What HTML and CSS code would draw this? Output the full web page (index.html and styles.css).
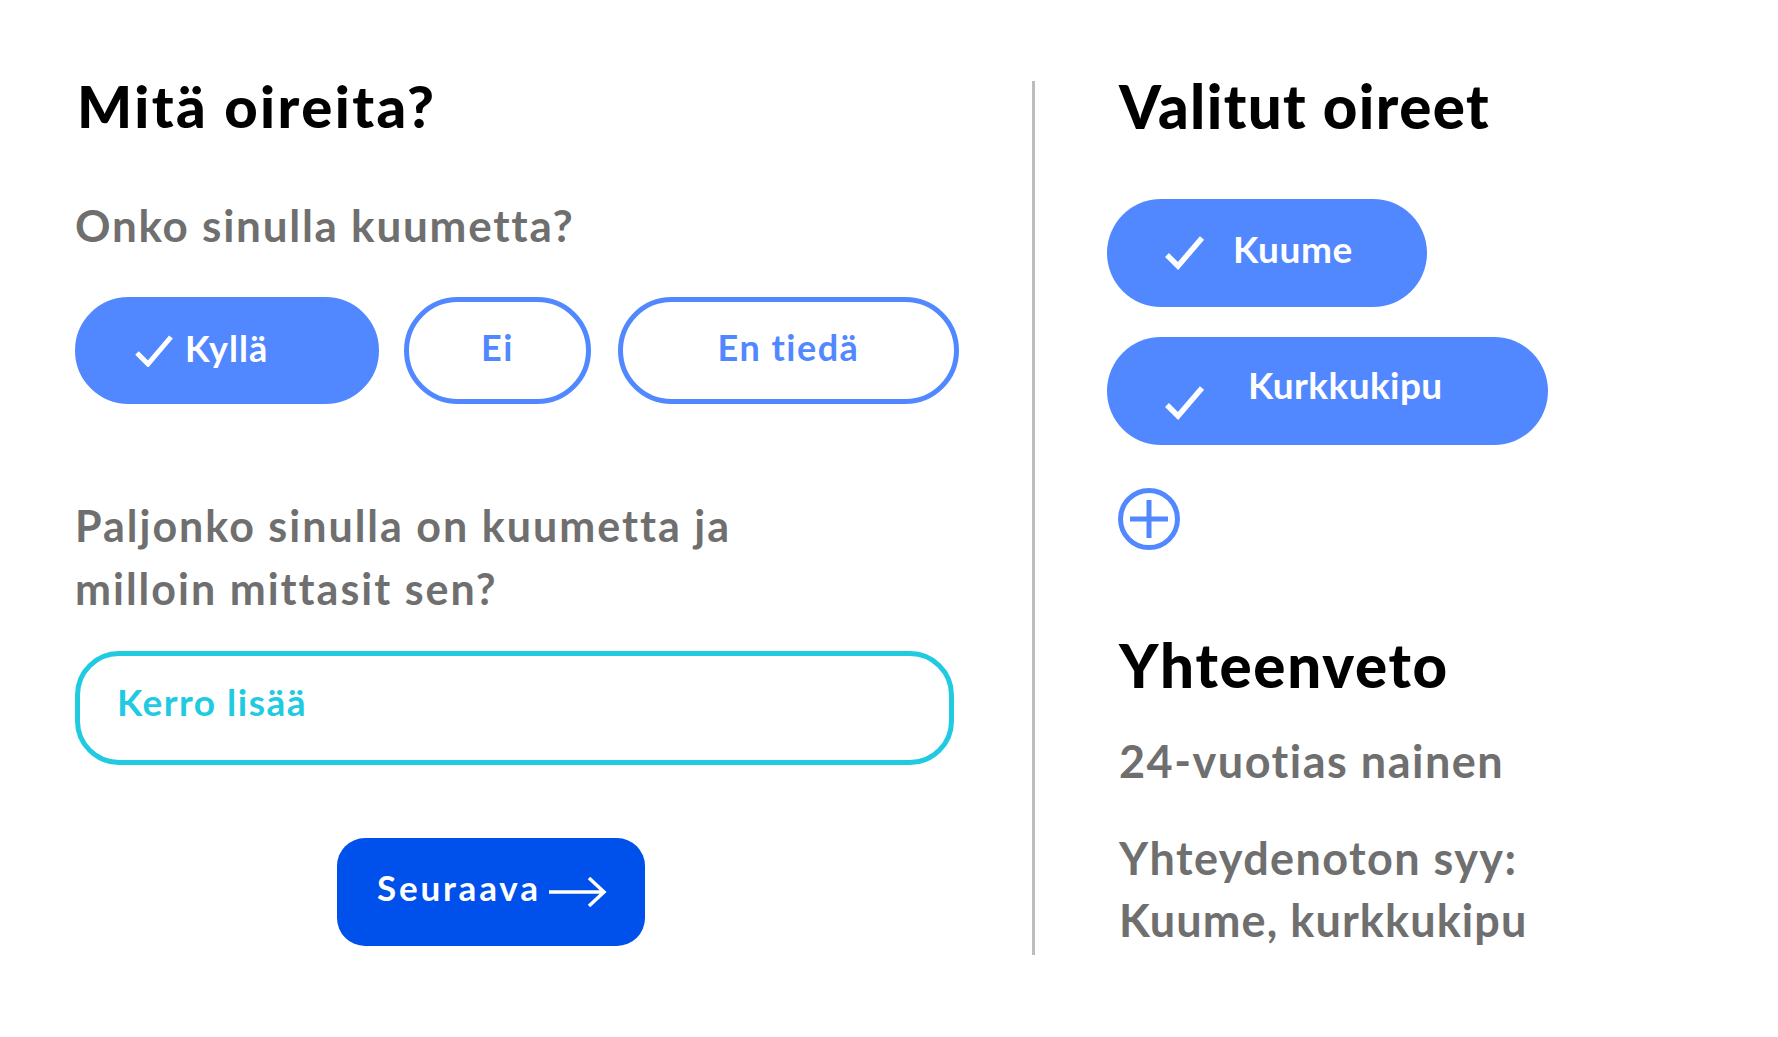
FILE: index.html
```html
<!DOCTYPE html>
<html lang="fi">
<head>
<meta charset="utf-8">
<title>Mitä oireita?</title>
<link rel="stylesheet" href="styles.css">
</head>
<body>
<div class="page">
  <section class="left">
    <h1 class="title">Mitä oireita?</h1>
    <p class="question q1">Onko sinulla kuumetta?</p>
    <div class="choices">
      <button class="choice choice--selected">
        <svg class="check-sm" width="38" height="32" viewBox="0 0 38 32"><path d="M2 18 L13 29 L36 2" fill="none" stroke="#fff" stroke-width="5"/></svg>
        <span>Kyllä</span>
      </button>
      <button class="choice choice--ei">Ei</button>
      <button class="choice choice--en">En tiedä</button>
    </div>
    <p class="question q2">Paljonko sinulla on kuumetta ja<br>milloin mittasit sen?</p>
    <input class="more" type="text" placeholder="Kerro lisää">
    <button class="next">
      <span>Seuraava</span>
      <svg class="arrow" width="58" height="32" viewBox="0 0 58 32"><path d="M0 16 H55 M40 2 L55 16 L40 30" fill="none" stroke="#fff" stroke-width="3.5"/></svg>
    </button>
  </section>
  <div class="divider"></div>
  <section class="right">
    <h2 class="title title--right">Valitut oireet</h2>
    <div class="chip chip--kuume">
      <svg class="check" width="40" height="34" viewBox="0 0 40 34"><path d="M2 19 L13 30 L37 2" fill="none" stroke="#fff" stroke-width="5.5"/></svg>
      <span>Kuume</span>
    </div>
    <div class="chip chip--kurkku">
      <svg class="check check--low" width="40" height="34" viewBox="0 0 40 34"><path d="M2 19 L13 30 L37 2" fill="none" stroke="#fff" stroke-width="5.5"/></svg>
      <span>Kurkkukipu</span>
    </div>
    <svg class="add" width="64" height="64" viewBox="0 0 64 64"><circle cx="32" cy="32" r="28.5" fill="none" stroke="#5288ff" stroke-width="5"/><path d="M13 32 H51 M32 13 V51" stroke="#5288ff" stroke-width="5"/></svg>
    <h2 class="title title--sum">Yhteenveto</h2>
    <p class="summary s1">24-vuotias nainen</p>
    <p class="summary s2"><span class="syy">Yhteydenoton syy:</span><br>Kuume, kurkkukipu</p>
  </section>
</div>
</body>
</html>
```
FILE: styles.css
```css
* { box-sizing: border-box; }
html, body { margin: 0; padding: 0; background: #fff; }
body { font-family: Lato, "Open Sans", sans-serif; font-weight: 700; }

.page {
  display: flex;
  align-items: flex-start;
  padding: 71px 0 0 75px;
}

.left {
  width: 883px;
  display: flex;
  flex-direction: column;
  align-items: flex-start;
}

.title {
  margin: 0;
  font-size: 58px;
  line-height: 70px;
  font-weight: 900;
  color: #000;
  padding-left: 2px;
  letter-spacing: 2.4px;
}

.question {
  margin: 0;
  color: #6f6f6f;
  font-weight: 700;
}
.q1 { font-size: 44px; line-height: 56px; margin-top: 56px; letter-spacing: 1.75px; }
.q2 { font-size: 43px; line-height: 63px; margin-top: 90px; letter-spacing: 2px; }

.choices {
  display: flex;
  gap: 25px;
  margin-top: 44px;
}

.choice {
  height: 107px;
  border-radius: 54px;
  border: 5px solid #5288ff;
  background: #fff;
  color: #5288ff;
  font-family: inherit;
  font-weight: 700;
  font-size: 36px;
  letter-spacing: 1.5px;
  display: flex;
  align-items: center;
  justify-content: center;
  padding: 0;
  cursor: pointer;
}
.choice--selected {
  width: 304px;
  background: #5288ff;
  color: #fff;
  justify-content: flex-start;
  padding-left: 55px;
  gap: 12px;
  letter-spacing: 1.1px;
}
.choice--selected span { margin-top: -6px; }
.choice--ei { width: 187px; }
.choice--en { width: 341px; margin-left: 2px; }
.choice--ei, .choice--en { padding-bottom: 8px; }

.more {
  margin-top: 31px;
  width: 879px;
  height: 114px;
  border: 5px solid #20cbe1;
  border-radius: 44px;
  padding: 0 0 13px 37px;
  font-family: inherit;
  font-weight: 700;
  font-size: 37px;
  letter-spacing: 1.5px;
  color: #20cbe1;
  outline: none;
  background: #fff;
}
.more::placeholder { color: #20cbe1; opacity: 1; }

.next {
  margin-top: 73px;
  margin-left: 262px;
  width: 308px;
  height: 108px;
  border: none;
  border-radius: 28px;
  background: #0050ec;
  color: #fff;
  font-family: inherit;
  font-weight: 700;
  font-size: 35px;
  letter-spacing: 2.8px;
  display: flex;
  align-items: center;
  padding: 0 0 0 40px;
  gap: 8px;
  cursor: pointer;
}
.next span { margin-top: -10px; }

.divider {
  width: 3px;
  height: 874px;
  margin: 10px 72px 0 74px;
  background: #bdbdbd;
}

.right {
  display: flex;
  flex-direction: column;
  align-items: flex-start;
}
.title--right { font-size: 60px; padding-left: 12px; letter-spacing: 1.4px; }

.chip {
  height: 108px;
  border-radius: 54px;
  background: #5288ff;
  color: #fff;
  font-size: 37px;
  letter-spacing: 0.6px;
  display: flex;
  align-items: center;
  padding-left: 58px;
}
.chip span { margin-top: -9px; }
.chip--kuume { width: 320px; gap: 28px; margin-top: 58px; }
.chip--kurkku { width: 441px; gap: 43px; margin-top: 30px; letter-spacing: 0.4px; }
.chip--kurkku span { margin-top: -14px; }
.check--low { margin-top: 24px; }

.add { margin: 42px 0 0 10px; display: block; }

.title--sum { font-size: 60px; padding-left: 12px; margin-top: 79px; letter-spacing: 1.7px; }

.summary {
  margin: 0;
  color: #6f6f6f;
  font-size: 45px;
  line-height: 62px;
  padding-left: 12px;
  letter-spacing: 1.1px;
}
.s1 { margin-top: 30px; letter-spacing: 1.5px; }
.s2 { margin-top: 35px; }
.syy { letter-spacing: 1.4px; }
```
